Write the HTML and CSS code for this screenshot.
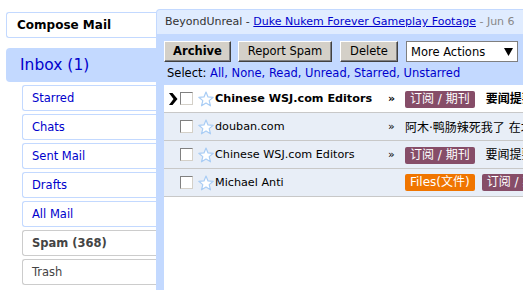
FILE: index.html
```html
<!DOCTYPE html>
<html>

<head>
    <meta charset="utf-8" />
    <title>Mail</title>
    <link rel="stylesheet" href="styles.css">
</head>

<body>
    <div class="page">
        <div class="nav">
            <div class="compose">Compose Mail</div>
            <div class="inbox">Inbox (1)</div>
            <div class="navitem">Starred</div>
            <div class="navitem">Chats</div>
            <div class="navitem">Sent Mail</div>
            <div class="navitem">Drafts</div>
            <div class="navitem">All Mail</div>
            <div class="navitem gray bold">Spam (368)</div>
            <div class="navitem gray">Trash</div>
        </div>

        <div class="panel">
            <div class="header">
                BeyondUnreal - <a href="#">Duke Nukem Forever Gameplay Footage</a> <span class="date">- Jun 6</span>
            </div>
            <div class="toolbar">
                <div class="btn bold archive">Archive</div>
                <div class="btn spam">Report Spam</div>
                <div class="btn delete">Delete</div>
                <div class="dropdown">
                    <span>More Actions</span>
                    <svg width="9" height="8" viewBox="0 0 9 8"><path d="M0 0H9L4.5 8Z" fill="#000" /></svg>
                </div>
            </div>
            <div class="selectline">
                Select: <span class="links">All, None, Read, Unread, Starred, Unstarred</span>
            </div>
            <div class="list">
                <div class="row unread">
                    <span class="cursor"><svg width="10" height="12" viewBox="0 0 10 12"><path d="M1 0H4.5L9.5 6L4.5 12H1L5.5 6Z" fill="#000" /></svg></span>
                    <span class="check"></span>
                    <span class="star"><svg width="16" height="16" viewBox="0 0 16 16"><path d="M8 1L10 5.9L15.2 6.3L11.2 9.6L12.5 14.8L8 12L3.5 14.8L4.8 9.6L0.8 6.3L6 5.9Z" fill="#fff" stroke="#a9cdf5" stroke-width="1.2" stroke-linejoin="round" /></svg></span>
                    <span class="from">Chinese WSJ.com Editors</span>
                    <span class="raquo">&raquo;</span>
                    <span class="subject"><span class="label purple">订阅 / 期刊</span> 要闻提要</span>
                </div>
                <div class="row">
                    <span class="cursor"></span>
                    <span class="check"></span>
                    <span class="star"><svg width="16" height="16" viewBox="0 0 16 16"><path d="M8 1L10 5.9L15.2 6.3L11.2 9.6L12.5 14.8L8 12L3.5 14.8L4.8 9.6L0.8 6.3L6 5.9Z" fill="#fff" stroke="#a9cdf5" stroke-width="1.2" stroke-linejoin="round" /></svg></span>
                    <span class="from">douban.com</span>
                    <span class="raquo">&raquo;</span>
                    <span class="subject">阿木·鸭肠辣死我了 在北京</span>
                </div>
                <div class="row">
                    <span class="cursor"></span>
                    <span class="check"></span>
                    <span class="star"><svg width="16" height="16" viewBox="0 0 16 16"><path d="M8 1L10 5.9L15.2 6.3L11.2 9.6L12.5 14.8L8 12L3.5 14.8L4.8 9.6L0.8 6.3L6 5.9Z" fill="#fff" stroke="#a9cdf5" stroke-width="1.2" stroke-linejoin="round" /></svg></span>
                    <span class="from">Chinese WSJ.com Editors</span>
                    <span class="raquo">&raquo;</span>
                    <span class="subject"><span class="label purple">订阅 / 期刊</span> 要闻提要</span>
                </div>
                <div class="row">
                    <span class="cursor"></span>
                    <span class="check"></span>
                    <span class="star"><svg width="16" height="16" viewBox="0 0 16 16"><path d="M8 1L10 5.9L15.2 6.3L11.2 9.6L12.5 14.8L8 12L3.5 14.8L4.8 9.6L0.8 6.3L6 5.9Z" fill="#fff" stroke="#a9cdf5" stroke-width="1.2" stroke-linejoin="round" /></svg></span>
                    <span class="from">Michael Anti</span>
                    <span class="raquo"></span>
                    <span class="subject"><span class="label orange">Files(文件)</span><span class="label purple">订阅 / 期刊</span></span>
                </div>
            </div>
        </div>
    </div>
</body>

</html>
```

FILE: styles.css
```css
body {
    margin: 0;
    font-family: "DejaVu Sans", "Noto Sans CJK SC", sans-serif;
    font-size: 11px;
    color: #000;
    background: #fff;
    overflow: hidden;
}

.page {
    display: flex;
    height: 290px;
}

.bold {
    font-weight: bold;
}

/* left navigation */

.nav {
    width: 150px;
    flex-shrink: 0;
    padding: 12px 0 0 6px;
}

.compose {
    height: 26px;
    box-sizing: border-box;
    border: 1px solid #c3d9ff;
    border-right: 0;
    border-radius: 3px 0 0 3px;
    padding-left: 10px;
    line-height: 24px;
    font-size: 12px;
    font-weight: bold;
    margin-bottom: 10px;
}

.inbox {
    height: 34px;
    background: #c3d9ff;
    border-radius: 4px 0 0 4px;
    padding-left: 14px;
    line-height: 34px;
    font-size: 15.5px;
    color: #0000cc;
    margin-bottom: 3px;
}

.navitem {
    height: 26px;
    box-sizing: border-box;
    margin: 0 0 3px 16px;
    border: 1px solid #c3d9ff;
    border-right: 0;
    border-radius: 3px 0 0 3px;
    padding-left: 9px;
    line-height: 24px;
    font-size: 11.5px;
    color: #0000cc;
}

.navitem.gray {
    border-color: #cccccc;
    color: #444;
}

/* main panel */

.panel {
    flex: 1;
    margin-top: 9px;
    background: #c3d9ff;
    border-top-left-radius: 4px;
    padding: 1px 0 0 1px;
    display: flex;
    flex-direction: column;
    min-width: 0;
}

.header {
    height: 24px;
    background: #e0ecff;
    border-top-left-radius: 3px;
    padding-left: 8px;
    line-height: 24px;
    color: #333;
    white-space: nowrap;
    overflow: hidden;
}

.header a {
    color: #0000cc;
}

.date {
    color: #888;
}

.toolbar {
    display: flex;
    padding: 7px 0 0 7px;
    height: 21px;
    font-size: 11.5px;
}

.btn {
    box-sizing: border-box;
    background: #d4d0c8;
    border: 1px solid;
    border-color: #fff #404040 #404040 #fff;
    box-shadow: inset -1px -1px #808080;
    text-align: center;
    line-height: 19px;
    white-space: nowrap;
}

.archive {
    width: 67px;
    margin-right: 7px;
}

.spam {
    width: 94px;
    margin-right: 8px;
}

.delete {
    width: 58px;
    margin-right: 8px;
}

.dropdown {
    width: 112px;
    box-sizing: border-box;
    background: #fff;
    border: 1px solid #7f7f7f;
    display: flex;
    align-items: center;
    justify-content: space-between;
    padding: 0 4px 0 4px;
}

.selectline {
    height: 23px;
    line-height: 22px;
    padding-left: 10px;
    font-size: 11.5px;
}

.links {
    color: #0000cc;
}

.list {
    flex: 1;
    background: #fff;
    margin-left: 7px;
}

.row {
    display: flex;
    align-items: center;
    height: 27px;
    border-bottom: 1px solid #c8c8c8;
    background: #e8eef7;
    white-space: nowrap;
    overflow: hidden;
}

.row.unread {
    background: #fff;
    font-weight: bold;
}

.row > span {
    flex-shrink: 0;
}

.cursor {
    width: 14px;
    padding-right: 2px;
    display: flex;
    justify-content: flex-end;
}

.check {
    width: 11px;
    height: 11px;
    border: 1px solid;
    border-color: #808080 #d4d0c8 #d4d0c8 #808080;
    background: #fff;
}

.star {
    display: flex;
    margin: 0 1px 0 5px;
}

.from {
    width: 173px;
    font-size: 11.2px;
}

.raquo {
    width: 17px;
}

.subject {
    font-size: 12px;
}

.label {
    display: inline-block;
    color: #fff;
    font-weight: normal;
    padding: 0 5px;
    line-height: 17px;
    border-radius: 2px;
    margin-right: 7px;
}

.purple {
    background: #864d68;
}

.orange {
    background: #f07500;
}
```
